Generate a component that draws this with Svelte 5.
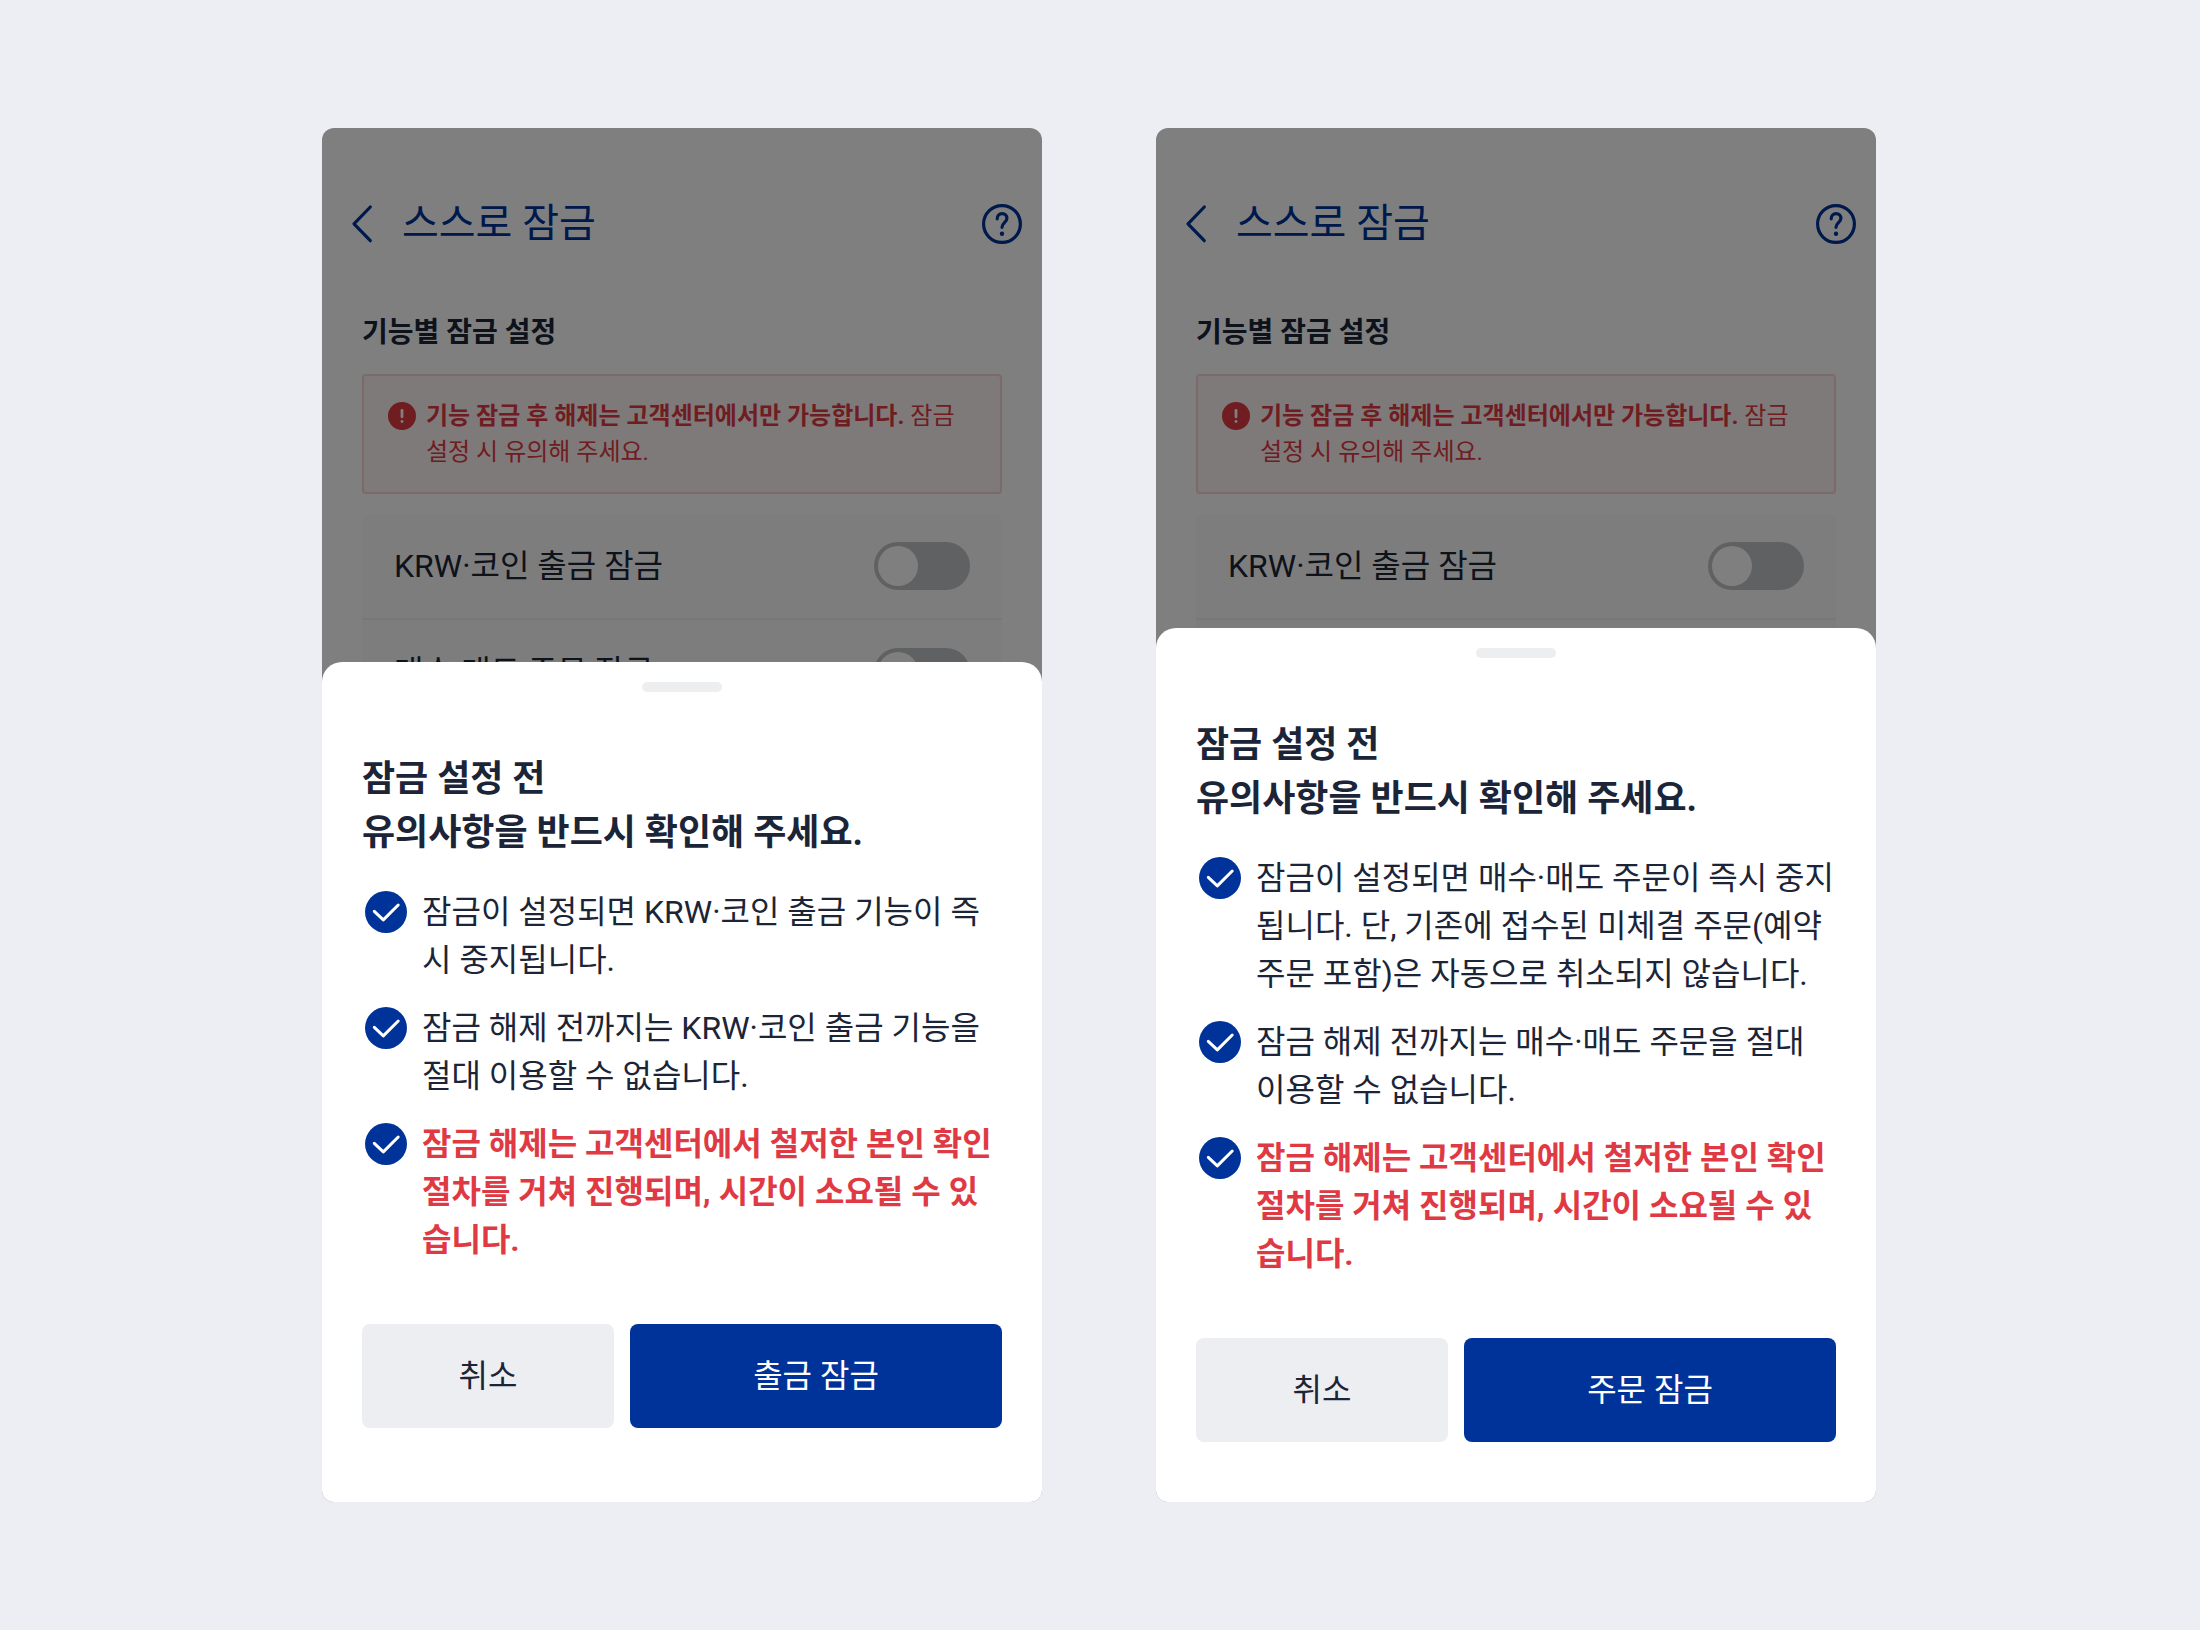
<script>
const phones = [
  {
    id: 'withdraw',
    confirm: '출금 잠금',
    inset: true,
    notes: [
      {text: '잠금이 설정되면 KRW·코인 출금 기능이 즉시 중지됩니다.'},
      {text: '잠금 해제 전까지는 KRW·코인 출금 기능을 절대 이용할 수 없습니다.'},
      {text: '잠금 해제는 고객센터에서 철저한 본인 확인 절차를 거쳐 진행되며, 시간이 소요될 수 있습니다.', warn: true}
    ]
  },
  {
    id: 'order',
    confirm: '주문 잠금',
    notes: [
      {text: '잠금이 설정되면 매수·매도 주문이 즉시 중지됩니다. 단, 기존에 접수된 미체결 주문(예약 주문 포함)은 자동으로 취소되지 않습니다.'},
      {text: '잠금 해제 전까지는 매수·매도 주문을 절대 이용할 수 없습니다.'},
      {text: '잠금 해제는 고객센터에서 철저한 본인 확인 절차를 거쳐 진행되며, 시간이 소요될 수 있습니다.', warn: true}
    ]
  }
]
const locks = ['KRW·코인 출금 잠금', '매수·매도 주문 잠금']
</script>

<main>
  {#each phones as phone}
  <section class="phone">
    <div class="screen">
      <header>
        <button class="icon" aria-label="뒤로">
          <svg width="40" height="40" viewBox="0 0 40 40"><path d="M28.300 3 12 19.800l16.300 16.900" /></svg>
        </button>
        <h1>스스로 잠금</h1>
        <button class="icon" aria-label="도움말">
          <svg width="40" height="40" viewBox="0 0 40 40">
            <circle cx="20" cy="20" r="18.400" />
            <path d="M15.200 14.800c0-3.100 2-5.200 4.900-5.200s4.800 2 4.800 4.700c0 4.200-4.900 4.600-4.900 9" />
            <circle class="dot" cx="20" cy="29.700" r="2.200" />
          </svg>
        </button>
      </header>
      <div class="content">
        <h2>기능별 잠금 설정</h2>
        <div class="alert">
          <svg width="28" height="28" viewBox="0 0 28 28">
            <circle cx="14" cy="14" r="14" />
            <path d="M14 8.300v6.500" />
            <path d="M14 19.500v.1" />
          </svg>
          <p><b>기능 잠금 후 해제는 고객센터에서만 가능합니다.</b> 잠금 설정 시 유의해 주세요.</p>
        </div>
        <ul class="locks">
          {#each locks as lock, i}
          <li>
            <label for="{phone.id}-{i}">{lock}</label>
            <input id="{phone.id}-{i}" type="checkbox" role="switch">
          </li>
          {/each}
        </ul>
      </div>
    </div>
    <div class="dim"></div>
    <div class="sheet" class:inset={phone.inset} role="dialog" aria-labelledby="{phone.id}-title">
      <div class="handle"></div>
      <h2 id="{phone.id}-title">잠금 설정 전<br>유의사항을 반드시 확인해 주세요.</h2>
      <ul class="notes">
        {#each phone.notes as note}
        <li class:warn={note.warn}>
          <svg width="48" height="48" viewBox="0 0 48 48">
            <circle cx="24" cy="24" r="21" />
            <path d="M12.300 23.400 21.300 31.900 36.200 17" />
          </svg>
          <p>{note.text}</p>
        </li>
        {/each}
      </ul>
      <div class="actions">
        <button class="cancel">취소</button>
        <button class="confirm">{phone.confirm}</button>
      </div>
    </div>
  </section>
  {/each}
</main>

<style>
:global(body) {
  background: #edeef4;
}

main {
  box-sizing: border-box;
  display: flex;
  gap: 114px;
  min-height: 100vh;
  padding: 128px 324px 128px 322px;
  color: #1b2537;
  font-family: Roboto, "Noto Sans CJK KR", sans-serif;
  font-size: 32px;
  line-height: 48px;
}

h1, h2, p, ul {
  margin: 0;
  padding: 0;
}

ul {
  list-style: none;
}

svg {
  display: block;
  flex: none;
  fill: none;
  stroke-linecap: round;
  stroke-linejoin: round;
}

button {
  border: 0;
  padding: 0;
  color: inherit;
  font: inherit;
  cursor: pointer;
}

/* screen, dim and sheet share one grid cell */
.phone {
  display: grid;
  flex: 1;
  overflow: hidden;
  border-radius: 12px;
  background: #fff;
}

.screen, .dim, .sheet {
  grid-area: 1 / 1;
  min-width: 0;
}

.dim {
  z-index: 1;
  background: rgba(0, 0, 0, .5);
}

header {
  display: flex;
  align-items: center;
  gap: 20px;
  height: 104px;
  padding: 44px 20px 0;
  color: #039;
}

header h1 {
  flex: 1;
  font-size: 40px;
  font-weight: 400;
  line-height: 60px;
}

.icon {
  background: none;
}

.icon svg {
  stroke: #039;
  stroke-width: 3.2;
}

.icon .dot {
  fill: #039;
  stroke: none;
}

.content {
  padding: 36px 40px;
}

.content h2 {
  margin-bottom: 20px;
  font-size: 28px;
  line-height: 42px;
}

.alert {
  display: flex;
  gap: 10px;
  margin-bottom: 20px;
  padding: 22px 24px;
  border: 2px solid #f9d2d5;
  border-radius: 4px;
  background: #fff5f4;
  color: #e03a44;
  font-size: 24px;
  line-height: 36px;
}

.alert svg {
  margin-top: 4px;
  fill: #e03a44;
}

.alert path {
  stroke: #fff;
  stroke-width: 2.8;
}

.locks {
  border-radius: 8px;
  background: #fafafa;
}

.locks li {
  display: flex;
  align-items: center;
  justify-content: space-between;
  padding: 28px 32px;
}

.locks li + li {
  border-top: 2px solid #f0f0f0;
}

.locks input {
  appearance: none;
  display: flex;
  box-sizing: border-box;
  width: 96px;
  height: 48px;
  margin: 0;
  padding: 4px;
  border-radius: 24px;
  background: #bec2c5;
}

.locks input::before {
  content: "";
  width: 40px;
  height: 40px;
  border-radius: 50%;
  background: #fff;
}

.locks input:checked {
  justify-content: flex-end;
  background: #039;
}

.sheet {
  z-index: 2;
  align-self: end;
  padding: 20px 40px 60px;
  border-radius: 20px 20px 0 0;
  background: #fff;
}

.sheet.inset {
  padding-bottom: 74px;
}

.handle {
  width: 80px;
  height: 10px;
  margin: 0 auto 60px;
  border-radius: 5px;
  background: #edeef0;
}

.sheet h2 {
  margin-bottom: 28px;
  font-size: 36px;
  line-height: 54px;
}

.notes {
  display: flex;
  flex-direction: column;
  gap: 20px;
}

.notes li {
  display: flex;
  gap: 12px;
}

.notes svg {
  fill: #039;
}

.notes path {
  fill: none;
  stroke: #fff;
  stroke-width: 3;
}

.warn {
  color: #df3a44;
  font-weight: 700;
}

.actions {
  display: grid;
  grid-template-columns: 21fr 31fr;
  gap: 16px;
  margin-top: 60px;
}

.actions button {
  padding: 28px 0;
  border-radius: 8px;
}

.cancel {
  background: #edeef2;
}

.confirm {
  background: #039;
  color: #fff;
}
</style>
